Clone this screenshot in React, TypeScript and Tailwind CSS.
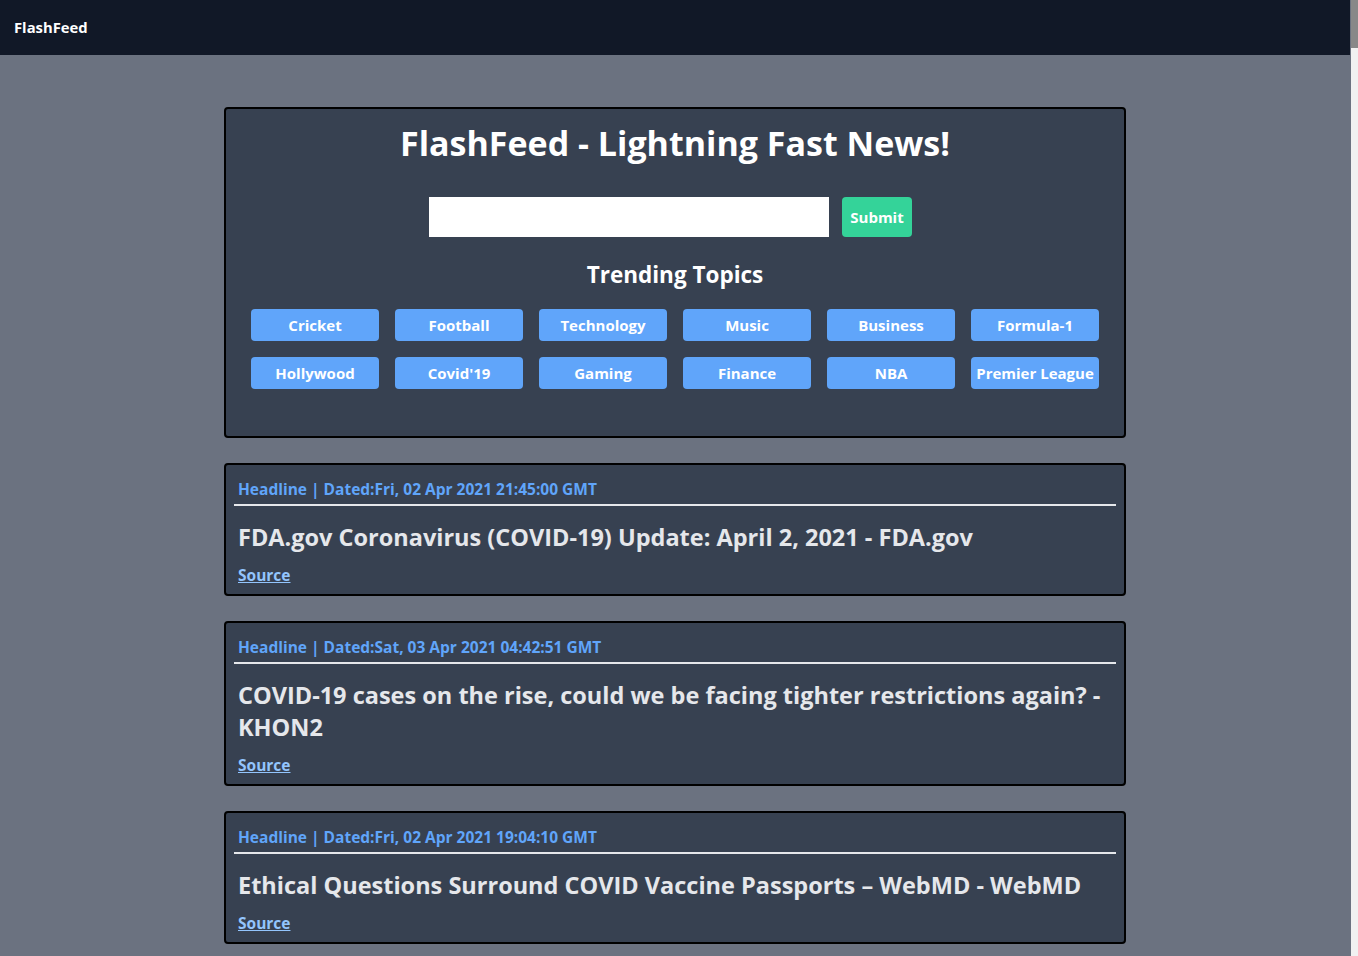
const topics = [
  "Cricket",
  "Football",
  "Technology",
  "Music",
  "Business",
  "Formula-1",
  "Hollywood",
  "Covid'19",
  "Gaming",
  "Finance",
  "NBA",
  "Premier League",
];

interface Article {
  title: string;
  date: string;
}

const articles: Article[] = [
  {
    title: "FDA.gov Coronavirus (COVID-19) Update: April 2, 2021 - FDA.gov",
    date: "Fri, 02 Apr 2021 21:45:00 GMT",
  },
  {
    title: "COVID-19 cases on the rise, could we be facing tighter restrictions again? - KHON2",
    date: "Sat, 03 Apr 2021 04:42:51 GMT",
  },
  {
    title: "Ethical Questions Surround COVID Vaccine Passports – WebMD - WebMD",
    date: "Fri, 02 Apr 2021 19:04:10 GMT",
  },
];

function NewsCard({ title, date }: Article) {
  return (
    <div className="mt-[25px] rounded border-2 border-black bg-[#374151] pt-3 pb-[7px]">
      <p className="px-3 text-[15.5px] leading-6 font-bold text-[#60a5fa]">
        Headline | Dated:{date}
      </p>
      <div className="mx-2 mt-[3px] h-[2px] bg-[#e5e7eb]" />
      <h2 className="mt-[15px] px-3 text-[23.5px] leading-8 font-bold text-[#e5e7eb]">{title}</h2>
      <a href="#" className="mt-[10px] block w-fit px-3 text-[15.5px] leading-6 font-bold text-[#93c5fd] underline">
        Source
      </a>
    </div>
  );
}

export default function App() {
  return (
    <div
      className="min-h-screen bg-[#6b7280] pr-[8px]"
      style={{ fontFamily: '"Open Sans", "Noto Sans", sans-serif' }}
    >
      <nav className="flex h-[55px] items-center bg-[#111827] px-[14px]">
        <span className="text-[14.8px] font-bold text-white">FlashFeed</span>
      </nav>

      <main className="mx-auto w-[902px] pt-[52px] pb-6">
        <section className="rounded border-2 border-black bg-[#374151] pt-[10px] pb-[47px]">
          <h1 className="text-center text-[34px] leading-[48px] font-bold text-white">
            FlashFeed - Lightning Fast News!
          </h1>
          <form
            className="mt-[30px] flex justify-center gap-[13px] pr-[9px]"
            onSubmit={(e) => e.preventDefault()}
          >
            <input type="text" className="h-10 w-[400px] bg-white px-2 text-black outline-none" />
            <button className="h-10 w-[70px] rounded bg-[#34d399] text-[15px] font-bold text-white">
              Submit
            </button>
          </form>
          <h3 className="mt-[22px] text-center text-[22.5px] leading-8 font-bold text-white">
            Trending Topics
          </h3>
          <div className="mx-auto mt-[18px] grid w-[848px] grid-cols-6 gap-4">
            {topics.map((t) => (
              <button
                key={t}
                className="h-8 rounded bg-[#60a5fa] text-[15px] font-bold whitespace-nowrap text-white"
              >
                {t}
              </button>
            ))}
          </div>
        </section>

        {articles.map((a) => (
          <NewsCard key={a.date} {...a} />
        ))}
      </main>

      {/* browser scrollbar */}
      <div className="fixed top-0 right-0 h-screen w-[7px] bg-[#f1f1f1]">
        <div className="h-12 w-full bg-[#888]" />
      </div>
    </div>
  );
}
